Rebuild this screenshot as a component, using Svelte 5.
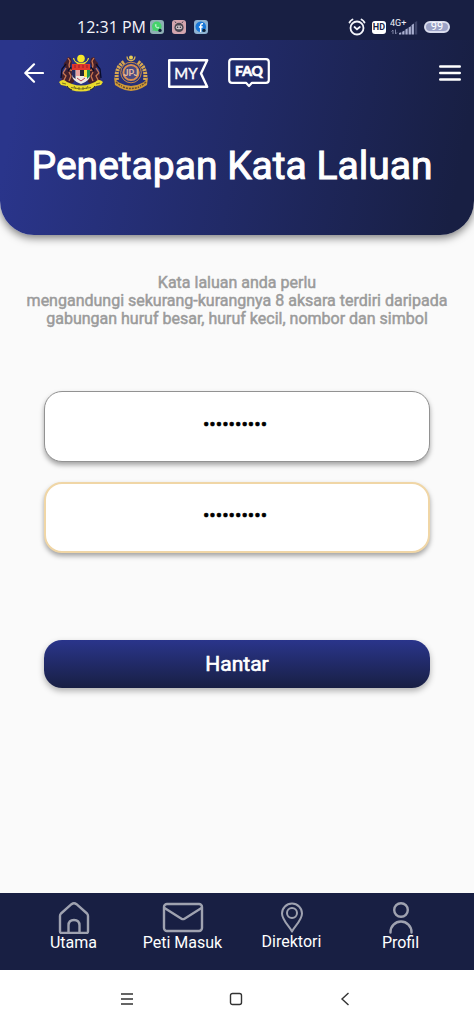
<script>
  let password = $state('Rahsia#123');
  let confirmation = $state('Rahsia#123');
</script>

<div class="screen">
  <div class="status">
    <span class="time">12:31 PM</span>
    <div class="apps">
      <svg width="14" height="14" viewBox="0 0 14 14" aria-hidden="true">
        <rect width="14" height="14" rx="3" fill="#8fb0b4" />
        <circle cx="6.8" cy="6.4" r="4.8" fill="#45d26b" />
        <path d="M2.4 11l.7-3 2 2z" fill="#45d26b" />
        <path d="M4.800 4.400c0 2.400 1.600 4 4 4.200l.5-1.300-1.200-.6-.7.6-1.300-1.400.6-.6-.5-1.300z" fill="#b9f0ca" />
        <circle cx="10" cy="10.400" r="1.700" fill="#10243a" />
      </svg>
      <svg width="14" height="14" viewBox="0 0 14 14" aria-hidden="true">
        <rect width="14" height="14" rx="3" fill="#d3a5ae" />
        <circle cx="7" cy="7.400" r="4.600" fill="#4a4752" />
        <path d="M4 3L3 1.500M10 3l1-1.500" stroke="#4a4752" />
        <rect x="3.800" y="5.600" width="6.400" height="3.600" rx="1.800" fill="#cfc3c9" />
        <circle cx="5.600" cy="7.300" r=".8" fill="#33303b" />
        <circle cx="8.400" cy="7.300" r=".8" fill="#33303b" />
      </svg>
      <svg width="14" height="14" viewBox="0 0 14 14" aria-hidden="true">
        <rect width="14" height="14" rx="3" fill="#8fb3d2" />
        <circle cx="6.800" cy="6.800" r="5.300" fill="#1877d8" />
        <path d="M9 3.700H8C6.900 3.700 6.700 4.500 6.700 5.500V12M4.900 7h3.800" fill="none" stroke="#fff" stroke-width="1.500" />
        <circle cx="10" cy="10.400" r="1.700" fill="#10243a" />
      </svg>
    </div>
    <div class="signals">
      <svg width="18" height="18" viewBox="0 0 18 18" fill="none" stroke="#f4f5fb" stroke-width="1.800" stroke-linecap="round" aria-hidden="true">
        <circle cx="9" cy="10" r="6.500" />
        <path d="M1.500 4.500Q2.500 2.500 4.500 1.500M16.500 4.500Q15.500 2.500 13.500 1.500M6.500 9L9 11.300 11.800 9" />
      </svg>
      <span class="hd">HD</span>
      <svg width="28" height="18" viewBox="0 0 28 18" aria-hidden="true">
        <text x="0" y="8" font-size="9" fill="#f0f1f8">4G+</text>
        <path d="M3 16v-4l-1.500 1.500M5.500 11.500v4.500L7 14.500" fill="none" stroke="#7d83a4" />
        <path d="M9 16.500h2.300v-2.200L9 15zM12.200 16.500h2.300v-4l-2.300 1.200zM15.400 16.500h2.300V10.200l-2.300 1.200zM18.600 16.500h2.300V8.200l-2.300 1.200zM21.600 16.500h2.300V5.600l-2.300 1.400z" fill="#a9afd0" />
        <path d="M24.700 16.500h2.500V3l-2.500 1.300z" fill="#3d4468" />
      </svg>
      <span class="battery">99</span>
    </div>
  </div>

  <header>
    <div class="toolbar">
      <button class="icon back" aria-label="Kembali">
        <svg width="20" height="20" viewBox="0 0 20 20" fill="none" stroke="#fff" stroke-width="2.200" stroke-linecap="round" stroke-linejoin="round">
          <path d="M19 10H1.500M10 1.300L1.300 10 10 18.700" />
        </svg>
      </button>
      <svg class="crest" width="48" height="38" viewBox="0 0 48 38" aria-hidden="true">
        <path d="M8 13Q5 10 9 7l2-4 3 1 1 5-2 4 5 3-1 12-6 4-7-1 1-10 5-6z" fill="#46202c" />
        <path d="M40 13Q43 10 39 7l-2-4-3 1-1 5 2 4-5 3 1 12 6 4 7-1-1-10-5-6z" fill="#46202c" />
        <path d="M11 4l2 3-1 4 1 5 4 1M9 14l-3 5 3 3-3 6M12 18l2 4-2 5M37 4l-2 3 1 4-1 5-4 1M39 14l3 5-3 3 3 6M36 18l-2 4 2 5" fill="none" stroke="#ca7651" stroke-width="1.300" />
        <path d="M9 10l-4 5-1 9M39 10l4 5 1 9M14 13l-3 4M34 13l3 4" fill="none" stroke="#090c29" stroke-width="1.300" />
        <circle cx="24" cy="4.500" r="3.800" fill="#f5e829" />
        <path d="M16.500 4C17.500 11 30.500 11 31.500 4 29.500 12.500 18.500 12.500 16.500 4z" fill="#f5e829" stroke="#f5e829" stroke-width=".8" />
        <path d="M15 10h18v11q0 6-9 9-9-3-9-9z" fill="#eee9e2" />
        <path d="M15 10h18v6H15z" fill="#e2382c" />
        <path d="M18 11v3M22 11v3M26 11v3M30 11v3" stroke="#a5252b" stroke-width="1.300" />
        <path d="M15 16h3.500v9Q15 23 15 21z" fill="#27285c" />
        <path d="M19 16h4v6h-4z" fill="#e9a3a0" />
        <path d="M23 16h4v6h-4z" fill="#252833" />
        <path d="M27 16h3v7h-3z" fill="#f3df38" />
        <path d="M30 16h3v6l-3 3z" fill="#1d9150" />
        <path d="M20 24l4 3 4-3" fill="none" stroke="#b53d51" />
        <path d="M2 28q4-4 8 0l5 2q9 3 18 0l5-2q4-4 8 0l-2 3-5 1-5 4q-10 3-20 0l-5-4-5-1z" fill="#e9da2c" />
        <path d="M5 29l4 1M14 33.500q10 3 20 0M43 29l-4 1M17 32l2 3M22 33v3M26 33v3M31 32l-2 3" fill="none" stroke="#655d20" stroke-width=".8" />
        <path d="M10 32q1 3 5 4M38 32q-1 3-5 4" fill="none" stroke="#151b3d" />
      </svg>
      <svg class="seal" width="36" height="38" viewBox="0 0 36 38" aria-hidden="true">
        <circle cx="18" cy="3.500" r="2" fill="#e8cf55" />
        <path d="M14 2.500C14.500 8 21.500 8 22 2.500" fill="none" stroke="#dcb552" stroke-width="1.300" />
        <path d="M11 8Q2 14 4 26M25 8Q34 14 32 26" fill="none" stroke="#d9a850" stroke-width="4" stroke-dasharray="2.300 .8" />
        <circle cx="18" cy="18.500" r="10.300" fill="#27367e" stroke="#c98a46" />
        <circle cx="18" cy="18.500" r="7.600" fill="#4a4a82" stroke="#d98e52" stroke-width="2" />
        <path d="M1 23q3 5 6 6 11 6 22 0 3-1 6-6l-1 8-5 3q-11 6-22 0l-5-3z" fill="#d09a37" />
        <path d="M3 28q3 3 6 4M33 28q-3 3-6 4M10 33q8 3 16 0" fill="none" stroke="#654d35" stroke-width="1.500" stroke-dasharray="2 1" />
        <text x="18" y="22" text-anchor="middle" font-size="9" font-weight="700" fill="#e0b79a">JPJ</text>
      </svg>
      <button class="icon lang" aria-label="Bahasa MY">
        <svg width="41" height="29" viewBox="0 0 41 29" aria-hidden="true">
          <path d="M1.200 1.200H39.200L33 14.500 39.200 27.800H1.200z" fill="none" stroke="#fff" stroke-width="2.400" stroke-linejoin="round" />
          <text class="round" x="18" y="20" text-anchor="middle" font-size="15" fill="#fff" stroke="#fff" stroke-width=".4">MY</text>
        </svg>
      </button>
      <button class="icon faq" aria-label="FAQ">
        <svg width="42" height="30" viewBox="0 0 42 30" aria-hidden="true">
          <path d="M4 1.200H38Q40.800 1.200 40.800 4V22Q40.800 24.800 38 24.800H24L21 28 18 24.800H4Q1.200 24.800 1.200 22V4Q1.200 1.200 4 1.200z" fill="none" stroke="#fff" stroke-width="2.200" stroke-linejoin="round" />
          <text class="round" x="21" y="18" text-anchor="middle" font-size="14" font-weight="700" fill="#fff" stroke="#fff" stroke-width=".7">FAQ</text>
        </svg>
      </button>
      <button class="icon menu" aria-label="Menu">
        <svg width="22" height="16" viewBox="0 0 22 16" stroke="#fff" stroke-width="2.400" stroke-linecap="round">
          <path d="M1.200 1.500h19.600M1.200 8h19.600M1.200 14.500h19.600" />
        </svg>
      </button>
    </div>
    <h1>Penetapan Kata Laluan</h1>
  </header>

  <main>
    <p>Kata laluan anda perlu<br />mengandungi sekurang-kurangnya 8 aksara terdiri daripada gabungan huruf besar, huruf kecil, nombor dan simbol</p>
    <form onsubmit={(event) => event.preventDefault()}>
      <input type="password" aria-label="Kata laluan" autocomplete="new-password" bind:value={password} />
      <input class="accent" type="password" aria-label="Sahkan kata laluan" autocomplete="new-password" bind:value={confirmation} />
      <button class="submit" type="submit">Hantar</button>
    </form>
  </main>

  <nav class="tabs">
    <a href="#utama">
      <svg width="32" height="32" viewBox="0 0 32 32">
        <path d="M3.500 31Q2 31 2 29.500V14Q2 12.500 3 11.500L13.500 2.200Q16 .3 18.500 2.200L29 11.500Q30 12.500 30 14V29.500Q30 31 28.500 31zM10.500 31V23.500Q10.500 18 16 18T21.500 23.500V31" />
      </svg>
      Utama
    </a>
    <a href="#peti">
      <svg width="42" height="32" viewBox="0 0 42 32">
        <rect x="2" y="2" width="38" height="27" rx="3" />
        <path d="M2.500 6L19.500 16.700Q21 17.600 22.500 16.700L39.500 6" />
      </svg>
      Peti Masuk
    </a>
    <a href="#direktori">
      <svg class="thin" width="24" height="31" viewBox="0 0 24 31">
        <path d="M12 29.500C9.500 24.500 2 18 2 11.500a10 10 0 0 1 20 0C22 18 14.500 24.500 12 29.500z" />
        <circle cx="12" cy="11" r="5" />
      </svg>
      Direktori
    </a>
    <a href="#profil">
      <svg width="26" height="32" viewBox="0 0 26 32">
        <circle cx="13" cy="8" r="6.800" />
        <path d="M2.500 30.500V30a10.500 10.500 0 0 1 21 0v.5" />
      </svg>
      Profil
    </a>
  </nav>

  <div class="system">
    <button class="icon" aria-label="Aplikasi terkini">
      <svg width="14" height="14" viewBox="0 0 14 14"><path d="M1 2h12M1 7h12M1 12h12" /></svg>
    </button>
    <button class="icon" aria-label="Skrin utama">
      <svg width="14" height="14" viewBox="0 0 14 14"><rect x="1.500" y="1.500" width="11" height="11" rx="2" /></svg>
    </button>
    <button class="icon" aria-label="Undur">
      <svg width="14" height="14" viewBox="0 0 14 14"><path d="M10.500 1L4 7l6.500 6" /></svg>
    </button>
  </div>
</div>

<style>
  :global(body) {
    margin: 0;
  }
  .screen {
    min-height: 100vh;
    display: flex;
    flex-direction: column;
    background: #fafafa;
    font-family: Roboto, sans-serif;
  }
  svg {
    display: block;
    flex: none;
  }
  button,
  input {
    font-family: inherit;
  }
  .icon {
    padding: 0;
    border: 0;
    background: none;
    display: grid;
    place-items: center;
    cursor: pointer;
  }
  .status {
    display: flex;
    align-items: center;
    box-sizing: border-box;
    height: 40px;
    padding: 14px 24px 0 77px;
    background: #181f43;
    color: #f4f5fb;
  }
  .time {
    font: 16px/24px "Open Sans", sans-serif;
    white-space: nowrap;
  }
  .apps {
    display: flex;
    gap: 8px;
    margin-left: 4px;
  }
  .signals {
    display: flex;
    align-items: center;
    gap: 4px;
    margin-left: auto;
  }
  .hd {
    padding: 0 1px;
    margin-left: 2px;
    border-radius: 3px;
    background: #fff;
    color: #181f43;
    font-size: 9px;
    line-height: 13px;
    font-weight: 700;
  }
  .battery {
    width: 22px;
    margin-left: 2px;
    border: 2px solid #d9dcec;
    border-radius: 8px;
    background: #9aa1c6;
    color: #fff;
    font-size: 11px;
    line-height: 8px;
    text-align: center;
  }
  header {
    display: flex;
    flex-direction: column;
    padding-bottom: 34px;
    border-radius: 0 0 34px 34px;
    background: linear-gradient(100deg, #2a358b 5%, #181f43 95%);
    box-shadow: 0 3px 9px rgba(0, 0, 0, 0.5);
    clip-path: inset(0 0 -20px);
  }
  .toolbar {
    display: flex;
    align-items: center;
    height: 66px;
    padding: 0 13px 0 24px;
  }
  .crest {
    margin-left: 13px;
  }
  .seal {
    margin-left: 8px;
  }
  .lang {
    margin-left: 19px;
  }
  .faq {
    margin-left: 19px;
  }
  .menu {
    margin-left: auto;
  }
  .round {
    font-family: Lato, sans-serif;
  }
  h1 {
    margin: 26px 0 0;
    padding-right: 10px;
    color: #fff;
    font-size: 39px;
    line-height: 69px;
    font-weight: 400;
    -webkit-text-stroke: 1px currentColor;
    text-align: center;
  }
  main {
    flex: 1;
    padding: 39px 24px;
  }
  p {
    margin: 0;
    color: #9b9b9b;
    font-size: 16px;
    line-height: 18px;
    font-weight: 400;
    -webkit-text-stroke: 0.03em currentColor;
    text-align: center;
  }
  form {
    display: flex;
    flex-direction: column;
    gap: 20px;
    margin-top: 63px;
    padding: 0 20px;
  }
  input {
    box-sizing: border-box;
    width: 100%;
    height: 71px;
    padding: 0 14px 4px 10px;
    border: 1px solid #929292;
    border-radius: 18px;
    outline: 0;
    background: #fff;
    box-shadow: 0 3px 5px rgba(0, 0, 0, 0.35);
    color: #000;
    font-size: 19px;
    text-align: center;
    -webkit-text-stroke: 0.03em currentColor;
  }
  .accent {
    border: 2px solid #f0d6a6;
  }
  .submit {
    height: 48px;
    margin-top: 67px;
    border: 0;
    border-radius: 18px;
    background: linear-gradient(#2a358b, #181f43);
    box-shadow: 0 3px 6px rgba(0, 0, 0, 0.3);
    color: #fff;
    font-size: 21px;
    font-weight: 400;
    -webkit-text-stroke: 0.03em currentColor;
  }
  .tabs {
    display: grid;
    grid-template-columns: repeat(4, 1fr);
    box-sizing: border-box;
    height: 77px;
    padding: 9px 19px 0;
    background: #181f43;
  }
  .tabs a {
    display: flex;
    flex-direction: column;
    align-items: center;
    color: #fff;
    font-size: 16px;
    line-height: 18px;
    text-decoration: none;
    white-space: nowrap;
  }
  .tabs svg {
    fill: none;
    stroke: #9fa2b0;
    stroke-width: 2.400;
    stroke-linecap: round;
    stroke-linejoin: round;
  }
  .tabs .thin {
    stroke-width: 2;
  }
  .system {
    display: grid;
    grid-template-columns: repeat(3, 1fr);
    height: 57px;
    padding: 0 74px 0 72px;
    background: #fff;
  }
  .system svg {
    fill: none;
    stroke: #333;
    stroke-width: 1.400;
  }
</style>
